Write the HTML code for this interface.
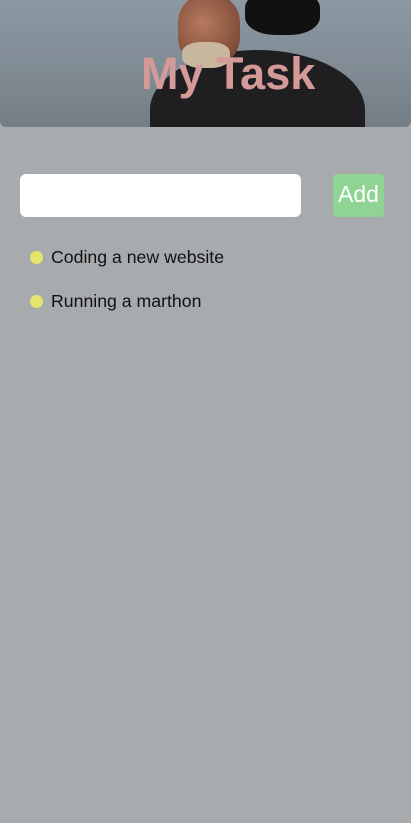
<!DOCTYPE html>
<html><head><style>
body{margin:0;width:411px;height:823px;background:#a8abae;font-family:"Liberation Sans",sans-serif;overflow:hidden;position:relative}
.hdr{position:absolute;left:0;top:0;width:411px;height:127px;border-radius:0 0 6px 6px;overflow:hidden;background:linear-gradient(180deg,#8c98a2 0%,#7f8a93 60%,#737d85 100%)}
.fig{position:absolute;left:150px;top:50px;width:215px;height:120px;background:#1f1f22;border-radius:50% 50% 0 0}
.head{position:absolute;left:178px;top:-5px;width:62px;height:70px;background:radial-gradient(circle at 40% 40%,#b67a5e,#6a3a2a);border-radius:40%}
.hair{position:absolute;left:245px;top:-10px;width:75px;height:45px;background:#111;border-radius:40%}
.beard{position:absolute;left:182px;top:42px;width:48px;height:26px;background:#c9b79d;border-radius:40%}
.t{position:absolute;left:141px;top:46px;width:182px;font-size:45px;font-weight:bold;color:#d49a98;letter-spacing:0px;line-height:56px;white-space:nowrap}
.inp{position:absolute;left:20px;top:174px;width:281px;height:43px;background:#fff;border-radius:6px}
.btn{position:absolute;left:333px;top:174px;width:51px;height:43px;background:#8fd492;border-radius:4px;color:#fff;font-size:23px;line-height:40px;text-align:center}
.it{position:absolute;left:30px;font-size:17.7px;color:#111;line-height:20px}
.it:before{content:"";display:inline-block;width:13px;height:13px;background:#e3e66a;border-radius:50%;margin-right:8px;vertical-align:-1px}
</style></head><body>
<div class="hdr"><div class="fig"></div><div class="hair"></div><div class="head"></div><div class="beard"></div><div class="t">My Task</div></div>
<div class="inp"></div><div class="btn">Add</div>
<div class="it" style="top:247px">Coding a new website</div>
<div class="it" style="top:291px">Running a marthon</div>
</body></html>
